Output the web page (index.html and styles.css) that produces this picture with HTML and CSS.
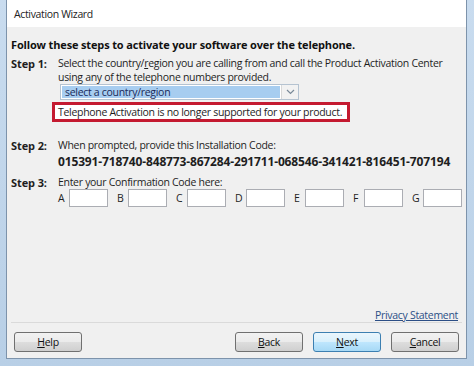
FILE: index.html
```html
<!DOCTYPE html>
<html lang="en">
<head>
  <meta charset="UTF-8">
  <title>Activation Wizard</title>
  <link rel="stylesheet" href="styles.css">
</head>
<body>

  <div class="frame">
    <div class="window">
      <div class="titlebar">Activation Wizard</div>

      <div class="content">
        <h1 class="lead">Follow these steps to activate your software over the telephone.</h1>

        <div class="step">
          <div class="step-label">Step 1:</div>
          <div class="step-body">
            <p>Select the country/<u>r</u>egion you are calling from and call the Product Activation Center using any of the telephone numbers provided.</p>
            <div class="select">
              <span class="select-value">select a country/region</span>
              <span class="select-arrow">
                <svg width="9" height="6" viewBox="0 0 9 6"><path d="M1 1 L4.5 4.5 L8 1" fill="none" stroke="#7a8a99" stroke-width="1.2"/></svg>
              </span>
            </div>
          </div>
        </div>
        <div class="notice">Telephone Activation is no longer supported for your product.</div>

        <div class="step step2">
          <div class="step-label">Step 2:</div>
          <div class="step-body">
            <p>When prompted, provide this Installation Code:</p>
            <div class="code">015391-718740-848773-867284-291711-068546-341421-816451-707194</div>
          </div>
        </div>

        <div class="step step3">
          <div class="step-label">Step 3:</div>
          <div class="step-body">
            <p>Enter your Confirmation Code here:</p>
            <div class="boxes">
              <label><span>A</span><input type="text"></label>
              <label><span>B</span><input type="text"></label>
              <label><span>C</span><input type="text"></label>
              <label><span>D</span><input type="text"></label>
              <label><span>E</span><input type="text"></label>
              <label><span>F</span><input type="text"></label>
              <label><span>G</span><input type="text"></label>
            </div>
          </div>
        </div>

        <div class="spacer"></div>
        <div class="privacy"><a href="#">Privacy Statement</a></div>
      </div>

      <div class="buttons">
        <button><u>H</u>elp</button>
        <div class="grow"></div>
        <button><u>B</u>ack</button>
        <button class="default"><u>N</u>ext</button>
        <button><u>C</u>ancel</button>
      </div>
    </div>
  </div>

</body>
</html>
```

FILE: styles.css
```css
body {
  margin: 0;
  padding: 0;
  font-family: 'Open Sans', 'Noto Sans', sans-serif;
  font-size: 10.5px;
  letter-spacing: -0.3px;
  color: #1e1e1e;
  width: 474px;
  height: 366px;
  overflow: hidden;
}

.frame {
  height: 366px;
  box-sizing: border-box;
  background: linear-gradient(to bottom, #c9dcef, #b8cfe6);
  padding: 0 7px 7px 6px;
}

.window {
  height: 100%;
  box-sizing: border-box;
  border: 1px solid #7d93ab;
  border-top: none;
  background: #f0f0f0;
  display: flex;
  flex-direction: column;
}

.titlebar {
  background: #fff;
  height: 27px;
  line-height: 28px;
  padding-left: 7px;
  font-size: 10.5px;
  letter-spacing: -0.35px;
  color: #222;
}

.content {
  flex: 1;
  display: flex;
  flex-direction: column;
  padding: 10px 4px 0 4px;
}

.lead {
  margin: 0 0 4px 0;
  font-size: 11px;
  letter-spacing: -0.15px;
  font-weight: bold;
  color: #111;
}

.step {
  display: flex;
}

.step-label {
  width: 47px;
  flex-shrink: 0;
  font-weight: bold;
  font-size: 11px;
  letter-spacing: -0.1px;
}

.step-body p {
  margin: 0;
  line-height: 14px;
}

.select {
  display: flex;
  width: 237px;
  height: 14px;
  margin: 0 0 0 2px;
  border: 1px solid #b5c3d1;
  background: #fff;
}

.select-value {
  flex: 1;
  background: #a7cdf0;
  margin: 1px;
  padding-left: 3px;
  line-height: 12px;
  color: #1a2a5a;
}

.select-arrow {
  width: 16px;
  display: flex;
  align-items: center;
  justify-content: center;
  background: #f2f2f2;
  border-left: 1px solid #d8d8d8;
}

.notice {
  align-self: flex-start;
  margin: 2px 0 0 41px;
  border: 3px solid #c41a30;
  background: #fff;
  padding: 0 5px 0 3px;
  line-height: 14px;
}

.step2 {
  margin-top: 16px;
}

.code {
  font-weight: bold;
  font-size: 12px;
  letter-spacing: -0.15px;
  margin-top: 2px;
  line-height: 15px;
}

.step3 {
  margin-top: 6px;
}

.boxes {
  display: flex;
  gap: 9px;
  margin-top: 0;
}

.boxes label {
  display: flex;
  align-items: center;
}

.boxes label span {
  width: 11px;
}

.boxes input {
  width: 37px;
  height: 16px;
  padding: 0;
  margin: 0;
  border: 1px solid #abadb3;
  background: #fff;
}

.spacer {
  flex: 1;
}

.privacy {
  text-align: right;
  padding: 0 4px 0 0;
  border-bottom: 1px solid #dadada;
}

.privacy a {
  color: #2c4f86;
}

.buttons {
  display: flex;
  gap: 10px;
  padding: 9px 7px 6px 7px;
}

.grow {
  flex: 1;
}

.buttons button {
  width: 68px;
  height: 20px;
  font-family: inherit;
  font-size: 10.5px;
  letter-spacing: -0.3px;
  color: #111;
  border: 1px solid #707070;
  border-radius: 3px;
  background: linear-gradient(to bottom, #f2f2f2 0%, #ebebeb 48%, #dddddd 52%, #cfcfcf 100%);
  padding: 0;
}

.buttons button.default {
  border-color: #3c7fb1;
  background: linear-gradient(to bottom, #eaf6fd 0%, #d9f0fc 48%, #bee6fd 52%, #a7d9f5 100%);
}
```
